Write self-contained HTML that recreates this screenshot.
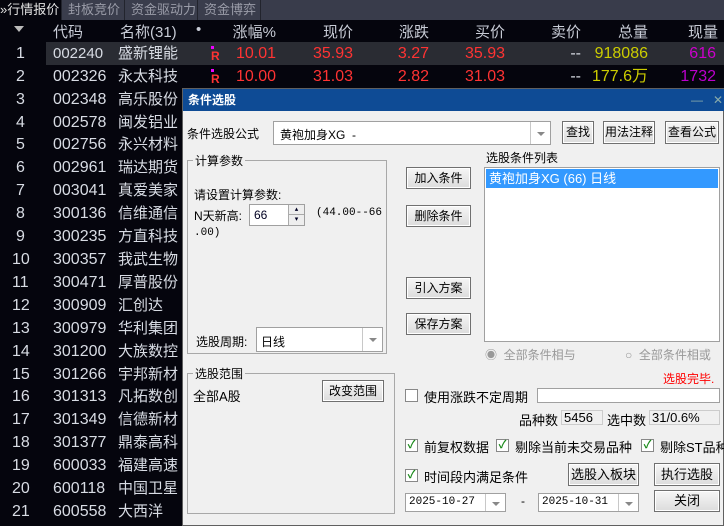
<!DOCTYPE html><html><head><meta charset="utf-8"><style>
*{margin:0;padding:0;box-sizing:border-box}
body{width:724px;height:526px;overflow:hidden;background:#05050d;font-family:"Liberation Sans","Noto Sans CJK SC",sans-serif;position:relative}
.a{position:absolute;white-space:nowrap}
.tabs{left:0;top:0;width:724px;height:20px;background:#393c4b}
.tab{top:0;height:20px;font-size:13px;color:#9a9ca8;line-height:20px;padding-left:6px;border-right:1px solid #22242d;background:#3a3d4c}
.hdr{left:0;top:20px;width:724px;height:22px;background:#05050d;font-size:15px;color:#c8ccd6}
.row{left:0;width:724px;height:23px;font-size:16px;color:#d8dce4;line-height:23px}
.row span:nth-child(3),.row span:nth-child(4){font-size:15px}
.r{text-align:right}
.dlg{left:182px;top:88px;width:542px;height:438px;background:#f0f0f0;border:1px solid #606060;font-size:12px;color:#000;font-family:"Liberation Sans","Noto Sans CJK SC",sans-serif}
.tb{left:0;top:0;width:542px;height:22px;background:#0e4b95;color:#fff;font-weight:bold;font-size:12px;line-height:22px;padding-left:5px}
.btn{background:linear-gradient(#f6f6f6,#dcdcdc);border:1px solid #707070;text-align:center;font-size:12px;line-height:20px;box-shadow:inset 0 0 0 1px #fff}
.box{background:#fff;border:1px solid #a0a0a0}
.grp{border:1px solid #a8a8a8}
.gl{background:#f0f0f0;padding:0 2px;font-size:12px}
.dd{position:absolute;right:0;top:0;bottom:0;width:20px;border-left:1px solid #c8c8c8}
.dd:after{content:"";position:absolute;left:6px;top:45%;border:4px solid transparent;border-top:4px solid #888}
.cb{width:13px;height:13px;border:1px solid #888;background:#fff;font-size:11px;color:#1a8a1a;line-height:11px;text-align:center;font-weight:bold}
</style></head><body>
<div class="a tabs"></div>
<div class="a tab" style="left:0;width:62px;background:#05050d;color:#e0e0e0;padding-left:0">»行情报价</div>
<div class="a tab" style="left:62px;width:63px">封板竞价</div>
<div class="a tab" style="left:125px;width:73px">资金驱动力</div>
<div class="a tab" style="left:198px;width:63px">资金博弈</div>
<div class="a hdr">
<span class="a" style="left:14px;top:6px;border:5px solid transparent;border-top:6px solid #bbb"></span>
<span class="a" style="left:53px;top:1px">代码</span>
<span class="a" style="left:120px;top:1px">名称(31)</span>
<span class="a" style="left:196px;top:1px">•</span>
<span class="a r" style="right:448px;top:1px">涨幅%</span>
<span class="a r" style="right:371px;top:1px">现价</span>
<span class="a r" style="right:295px;top:1px">涨跌</span>
<span class="a r" style="right:219px;top:1px">买价</span>
<span class="a r" style="right:143px;top:1px">卖价</span>
<span class="a r" style="right:76px;top:1px">总量</span>
<span class="a r" style="right:6px;top:1px">现量</span>
</div>
<div class="a row" style="top:42px"><div class="a" style="left:46px;width:678px;height:23px;background:#2a2c33"></div>
<span class="a" style="left:16px">1</span><span class="a" style="left:53px">002240</span><span class="a" style="left:118px">盛新锂能</span>
<span class="a" style="left:211px;top:4px;width:3px;height:3px;background:#e0f"></span><span class="a" style="left:211px;top:3px;font-size:12px;color:#f33;font-weight:bold">R</span>
<span class="a" style="right:448px;color:#f33">10.01</span><span class="a" style="right:371px;color:#f33">35.93</span><span class="a" style="right:295px;color:#f33">3.27</span><span class="a" style="right:219px;color:#f33">35.93</span><span class="a" style="right:143px">--</span><span class="a" style="right:76px;color:#cc0">918086</span><span class="a" style="right:8px;color:#c0c">616</span></div>
<div class="a row" style="top:65px">
<span class="a" style="left:16px">2</span><span class="a" style="left:53px">002326</span><span class="a" style="left:118px">永太科技</span>
<span class="a" style="left:211px;top:4px;width:3px;height:3px;background:#e0f"></span><span class="a" style="left:211px;top:3px;font-size:12px;color:#f33;font-weight:bold">R</span>
<span class="a" style="right:448px;color:#f33">10.00</span><span class="a" style="right:371px;color:#f33">31.03</span><span class="a" style="right:295px;color:#f33">2.82</span><span class="a" style="right:219px;color:#f33">31.03</span><span class="a" style="right:143px">--</span><span class="a" style="right:76px;color:#cc0">177.6万</span><span class="a" style="right:8px;color:#b0c">1732</span></div>
<div class="a row" style="top:88px"><span class="a" style="left:16px">3</span><span class="a" style="left:53px">002348</span><span class="a" style="left:118px">高乐股份</span></div>
<div class="a row" style="top:111px"><span class="a" style="left:16px">4</span><span class="a" style="left:53px">002578</span><span class="a" style="left:118px">闽发铝业</span></div>
<div class="a row" style="top:133px"><span class="a" style="left:16px">5</span><span class="a" style="left:53px">002756</span><span class="a" style="left:118px">永兴材料</span></div>
<div class="a row" style="top:156px"><span class="a" style="left:16px">6</span><span class="a" style="left:53px">002961</span><span class="a" style="left:118px">瑞达期货</span></div>
<div class="a row" style="top:179px"><span class="a" style="left:16px">7</span><span class="a" style="left:53px">003041</span><span class="a" style="left:118px">真爱美家</span></div>
<div class="a row" style="top:202px"><span class="a" style="left:16px">8</span><span class="a" style="left:53px">300136</span><span class="a" style="left:118px">信维通信</span></div>
<div class="a row" style="top:225px"><span class="a" style="left:16px">9</span><span class="a" style="left:53px">300235</span><span class="a" style="left:118px">方直科技</span></div>
<div class="a row" style="top:248px"><span class="a" style="left:12px">10</span><span class="a" style="left:53px">300357</span><span class="a" style="left:118px">我武生物</span></div>
<div class="a row" style="top:271px"><span class="a" style="left:12px">11</span><span class="a" style="left:53px">300471</span><span class="a" style="left:118px">厚普股份</span></div>
<div class="a row" style="top:294px"><span class="a" style="left:12px">12</span><span class="a" style="left:53px">300909</span><span class="a" style="left:118px">汇创达</span></div>
<div class="a row" style="top:317px"><span class="a" style="left:12px">13</span><span class="a" style="left:53px">300979</span><span class="a" style="left:118px">华利集团</span></div>
<div class="a row" style="top:340px"><span class="a" style="left:12px">14</span><span class="a" style="left:53px">301200</span><span class="a" style="left:118px">大族数控</span></div>
<div class="a row" style="top:363px"><span class="a" style="left:12px">15</span><span class="a" style="left:53px">301266</span><span class="a" style="left:118px">宇邦新材</span></div>
<div class="a row" style="top:385px"><span class="a" style="left:12px">16</span><span class="a" style="left:53px">301313</span><span class="a" style="left:118px">凡拓数创</span></div>
<div class="a row" style="top:408px"><span class="a" style="left:12px">17</span><span class="a" style="left:53px">301349</span><span class="a" style="left:118px">信德新材</span></div>
<div class="a row" style="top:431px"><span class="a" style="left:12px">18</span><span class="a" style="left:53px">301377</span><span class="a" style="left:118px">鼎泰高科</span></div>
<div class="a row" style="top:454px"><span class="a" style="left:12px">19</span><span class="a" style="left:53px">600033</span><span class="a" style="left:118px">福建高速</span></div>
<div class="a row" style="top:477px"><span class="a" style="left:12px">20</span><span class="a" style="left:53px">600118</span><span class="a" style="left:118px">中国卫星</span></div>
<div class="a row" style="top:500px"><span class="a" style="left:12px">21</span><span class="a" style="left:53px">600558</span><span class="a" style="left:118px">大西洋</span></div>

<div class="a dlg">
<div class="a tb">条件选股<span class="a" style="right:22px;top:0;font-weight:normal;color:#8aa">—</span><span class="a" style="right:2px;top:0;font-weight:normal;color:#8aa">✕</span></div>
<div class="a" style="left:4px;top:36px">条件选股公式</div>
<div class="a box" style="left:90px;top:32px;width:278px;height:24px;padding:4px 6px">黄袍加身XG &nbsp;-<div class="dd"></div></div>
<div class="a btn" style="left:379px;top:32px;width:32px;height:23px">查找</div>
<div class="a btn" style="left:420px;top:32px;width:52px;height:23px">用法注释</div>
<div class="a btn" style="left:482px;top:32px;width:54px;height:23px">查看公式</div>
<div class="a grp" style="left:4px;top:71px;width:200px;height:194px"></div>
<div class="a gl" style="left:10px;top:63px">计算参数</div>
<div class="a" style="left:11px;top:97px">请设置计算参数:</div>
<div class="a" style="left:11px;top:118px">N天新高:</div>
<div class="a box" style="left:66px;top:115px;width:56px;height:22px;padding:3px 4px;color:#002">66<div class="a" style="right:0;top:0;width:16px;height:20px;border-left:1px solid #aaa;background:#eee"><div style="height:10px;border-bottom:1px solid #aaa;font-size:7px;text-align:center;line-height:9px">▴</div><div style="font-size:7px;text-align:center;line-height:9px">▾</div></div></div>
<div class="a" style="left:133px;top:118px;font-family:'Liberation Mono',monospace;font-size:11px">(44.00--66</div>
<div class="a" style="left:11px;top:138px;font-family:'Liberation Mono',monospace;font-size:11px">.00)</div>
<div class="a" style="left:13px;top:244px">选股周期:</div>
<div class="a box" style="left:73px;top:238px;width:127px;height:25px;padding:5px 4px">日线<div class="dd"></div></div>
<div class="a btn" style="left:223px;top:78px;width:65px;height:22px">加入条件</div>
<div class="a btn" style="left:223px;top:116px;width:65px;height:22px">删除条件</div>
<div class="a btn" style="left:223px;top:188px;width:65px;height:22px">引入方案</div>
<div class="a btn" style="left:223px;top:224px;width:65px;height:22px">保存方案</div>
<div class="a" style="left:303px;top:60px">选股条件列表</div>
<div class="a box" style="left:301px;top:78px;width:236px;height:175px"><div style="margin:1px;height:19px;background:#3399ff;color:#fff;padding:2px 3px;font-size:13px;line-height:15px">黄袍加身XG (66) 日线</div></div>
<div class="a" style="left:302px;top:257px;color:#999">◉ &nbsp;全部条件相与</div>
<div class="a" style="left:442px;top:257px;color:#999">○ &nbsp;全部条件相或</div>
<div class="a grp" style="left:4px;top:284px;width:208px;height:141px"></div>
<div class="a gl" style="left:10px;top:276px">选股范围</div>
<div class="a" style="left:10px;top:297px;font-size:13px">全部A股</div>
<div class="a btn" style="left:139px;top:291px;width:62px;height:22px">改变范围</div>
<div class="a" style="left:480px;top:281px;color:#f00">选股完毕.</div>
<div class="a cb" style="left:222px;top:300px"></div><div class="a" style="left:241px;top:298px;font-size:13px">使用涨跌不定周期</div>
<div class="a box" style="left:354px;top:299px;width:183px;height:15px"></div>
<div class="a" style="left:336px;top:321px;font-size:13px">品种数</div>
<div class="a" style="left:378px;top:321px;width:42px;height:15px;border:1px solid #ccc;padding-left:2px;line-height:13px;font-size:13px">5456</div>
<div class="a" style="left:424px;top:321px;font-size:13px">选中数</div>
<div class="a" style="left:466px;top:321px;width:71px;height:15px;border:1px solid #ccc;padding-left:2px;line-height:13px;font-size:13px">31/0.6%</div>
<div class="a cb" style="left:222px;top:350px">✓</div><div class="a" style="left:241px;top:348px;font-size:13px">前复权数据</div>
<div class="a cb" style="left:313px;top:350px">✓</div><div class="a" style="left:332px;top:348px;font-size:13px">剔除当前未交易品种</div>
<div class="a cb" style="left:458px;top:350px">✓</div><div class="a" style="left:477px;top:348px;font-size:13px">剔除ST品种</div>
<div class="a cb" style="left:222px;top:380px">✓</div><div class="a" style="left:241px;top:378px;font-size:13px">时间段内满足条件</div>
<div class="a btn" style="left:385px;top:374px;width:71px;height:23px;line-height:21px;font-size:13px">选股入板块</div>
<div class="a btn" style="left:471px;top:374px;width:66px;height:23px;line-height:21px;font-size:13px">执行选股</div>
<div class="a box" style="left:222px;top:404px;width:101px;height:19px;padding:2px 3px;font-family:'Liberation Mono',monospace;font-size:11px">2025-10-27<div class="dd"></div></div>
<div class="a" style="left:338px;top:405px">-</div>
<div class="a box" style="left:355px;top:404px;width:101px;height:19px;padding:2px 3px;font-family:'Liberation Mono',monospace;font-size:11px">2025-10-31<div class="dd"></div></div>
<div class="a btn" style="left:471px;top:401px;width:66px;height:22px;font-size:13px">关闭</div>
</div>
</body></html>
